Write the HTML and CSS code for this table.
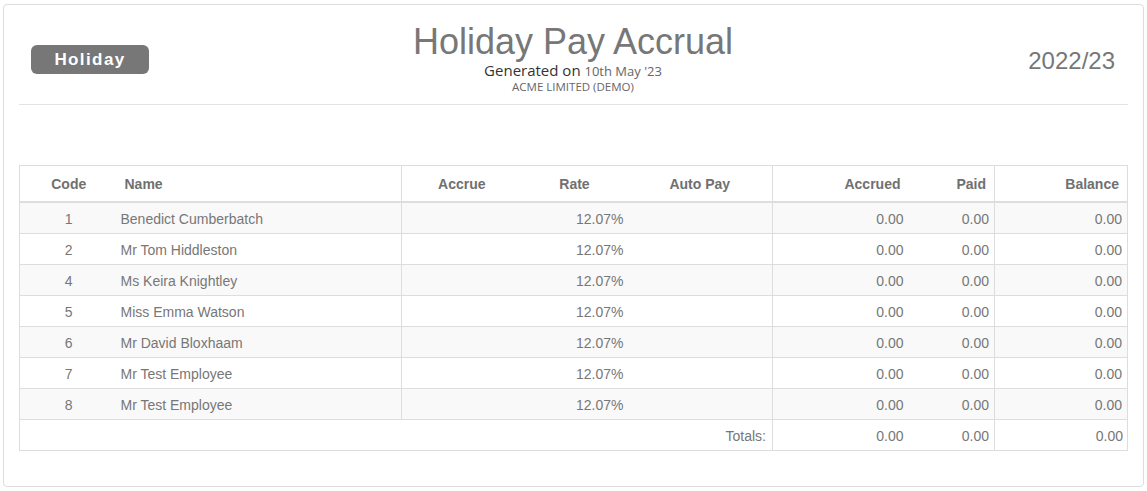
FILE: index.html
```html
<!DOCTYPE html>
<html>
<head>
<meta charset="utf-8">
<link rel="stylesheet" href="styles.css">
</head>
<body>
<div class="card">
  <div class="report-head">
    <div class="head-left"><span class="badge">Holiday</span></div>
    <div class="head-center">
      <h1 class="title">Holiday Pay Accrual</h1>
      <div class="generated">Generated on <span class="gen-date">10th May '23</span></div>
      <div class="company">ACME LIMITED (DEMO)</div>
    </div>
    <div class="head-right"><span class="year">2022/23</span></div>
  </div>
  <div class="rule"></div>
  <table class="grid">
    <colgroup>
      <col class="c-code"><col class="c-name"><col class="c-accrue"><col class="c-rate"><col class="c-auto"><col class="c-accrued"><col class="c-paid"><col class="c-bal">
    </colgroup>
    <thead>
      <tr>
        <th class="center">Code</th>
        <th class="left">Name</th>
        <th class="center sep">Accrue</th>
        <th class="center">Rate</th>
        <th class="center">Auto Pay</th>
        <th class="right sep">Accrued</th>
        <th class="right">Paid</th>
        <th class="right sep">Balance</th>
      </tr>
    </thead>
    <tbody>
      <tr><td class="center">1</td><td class="left">Benedict Cumberbatch</td><td class="sep"></td><td class="right">12.07%</td><td></td><td class="right sep">0.00</td><td class="right">0.00</td><td class="right sep">0.00</td></tr>
      <tr><td class="center">2</td><td class="left">Mr Tom Hiddleston</td><td class="sep"></td><td class="right">12.07%</td><td></td><td class="right sep">0.00</td><td class="right">0.00</td><td class="right sep">0.00</td></tr>
      <tr><td class="center">4</td><td class="left">Ms Keira Knightley</td><td class="sep"></td><td class="right">12.07%</td><td></td><td class="right sep">0.00</td><td class="right">0.00</td><td class="right sep">0.00</td></tr>
      <tr><td class="center">5</td><td class="left">Miss Emma Watson</td><td class="sep"></td><td class="right">12.07%</td><td></td><td class="right sep">0.00</td><td class="right">0.00</td><td class="right sep">0.00</td></tr>
      <tr><td class="center">6</td><td class="left">Mr David Bloxhaam</td><td class="sep"></td><td class="right">12.07%</td><td></td><td class="right sep">0.00</td><td class="right">0.00</td><td class="right sep">0.00</td></tr>
      <tr><td class="center">7</td><td class="left">Mr Test Employee</td><td class="sep"></td><td class="right">12.07%</td><td></td><td class="right sep">0.00</td><td class="right">0.00</td><td class="right sep">0.00</td></tr>
      <tr><td class="center">8</td><td class="left">Mr Test Employee</td><td class="sep"></td><td class="right">12.07%</td><td></td><td class="right sep">0.00</td><td class="right">0.00</td><td class="right sep">0.00</td></tr>
    </tbody>
    <tfoot>
      <tr><td colspan="5" class="right totals-label">Totals:</td><td class="right sep">0.00</td><td class="right">0.00</td><td class="right sep">0.00</td></tr>
    </tfoot>
  </table>
</div>
</body>
</html>
```
FILE: styles.css
```css
html, body {
  margin: 0;
  padding: 0;
  background: #ffffff;
}
body {
  padding: 4px 3px 0 3px;
  font-family: "Liberation Sans", Arial, sans-serif;
  color: #777777;
}
.card {
  width: 1141px;
  box-sizing: border-box;
  border: 1px solid #dddddd;
  border-radius: 4px;
  padding: 0 15px 35px 15px;
}
.report-head {
  display: flex;
  align-items: center;
  justify-content: space-between;
  padding-top: 18px;
  padding-bottom: 10px;
}
.head-left, .head-right {
  width: 300px;
  display: flex;
}
.head-left { justify-content: flex-start; padding-left: 12px; padding-top: 1px; }
.head-right { justify-content: flex-end; padding-right: 13px; padding-top: 4px; }
.badge {
  display: inline-block;
  width: 118px;
  height: 29px;
  line-height: 29px;
  text-align: center;
  background: #777777;
  color: #ffffff;
  border-radius: 6px;
  font-weight: bold;
  font-size: 17px;
  letter-spacing: 1.4px;
}
.head-center {
  text-align: center;
}
.title {
  margin: 0;
  font-size: 36px;
  font-weight: normal;
  line-height: 38px;
  color: #777777;
}
.generated {
  font-family: "Open Sans", "Liberation Sans", sans-serif;
  font-size: 15px;
  line-height: 18px;
  color: #333333;
}
.gen-date {
  font-size: 13px;
  color: #666666;
}
.company {
  font-family: "Open Sans", "Liberation Sans", sans-serif;
  font-size: 11.5px;
  line-height: 14px;
  color: #666666;
}
.year {
  font-size: 24px;
  color: #777777;
}
.rule {
  height: 1px;
  background: #e3e3e3;
  margin-bottom: 60px;
}
.grid {
  width: 1108px;
  table-layout: fixed;
  border-collapse: collapse;
  border: 1px solid #dddddd;
  font-size: 14px;
}
.c-code { width: 98px; }
.c-name { width: 284px; }
.c-accrue { width: 120px; }
.c-rate { width: 106px; }
.c-auto { width: 145px; }
.c-accrued { width: 136px; }
.c-paid { width: 86px; }
.c-bal { width: 133px; }
.grid th {
  font-weight: bold;
  color: #707070;
  padding: 10px 8px 9px 8px;
  line-height: 16px;
  border-bottom: 2px solid #dddddd;
}
.grid td {
  padding: 8px 5px 6px 5px;
  line-height: 16px;
  color: #777777;
  border-top: 1px solid #dddddd;
}
.grid tbody tr:nth-child(odd) td {
  background: #f9f9f9;
}
.grid .center { text-align: center; }
.grid .left { text-align: left; }
.grid .right { text-align: right; }
.grid th.left { padding-left: 7px; }
.grid td.left { padding-left: 3px; }
.grid td:nth-child(4) { padding-right: 4px; }
.grid th.center { padding-left: 0; padding-right: 0; }
.grid .sep { border-left: 1px solid #dddddd; }
.grid td.totals-label { padding-right: 6px; }
```
